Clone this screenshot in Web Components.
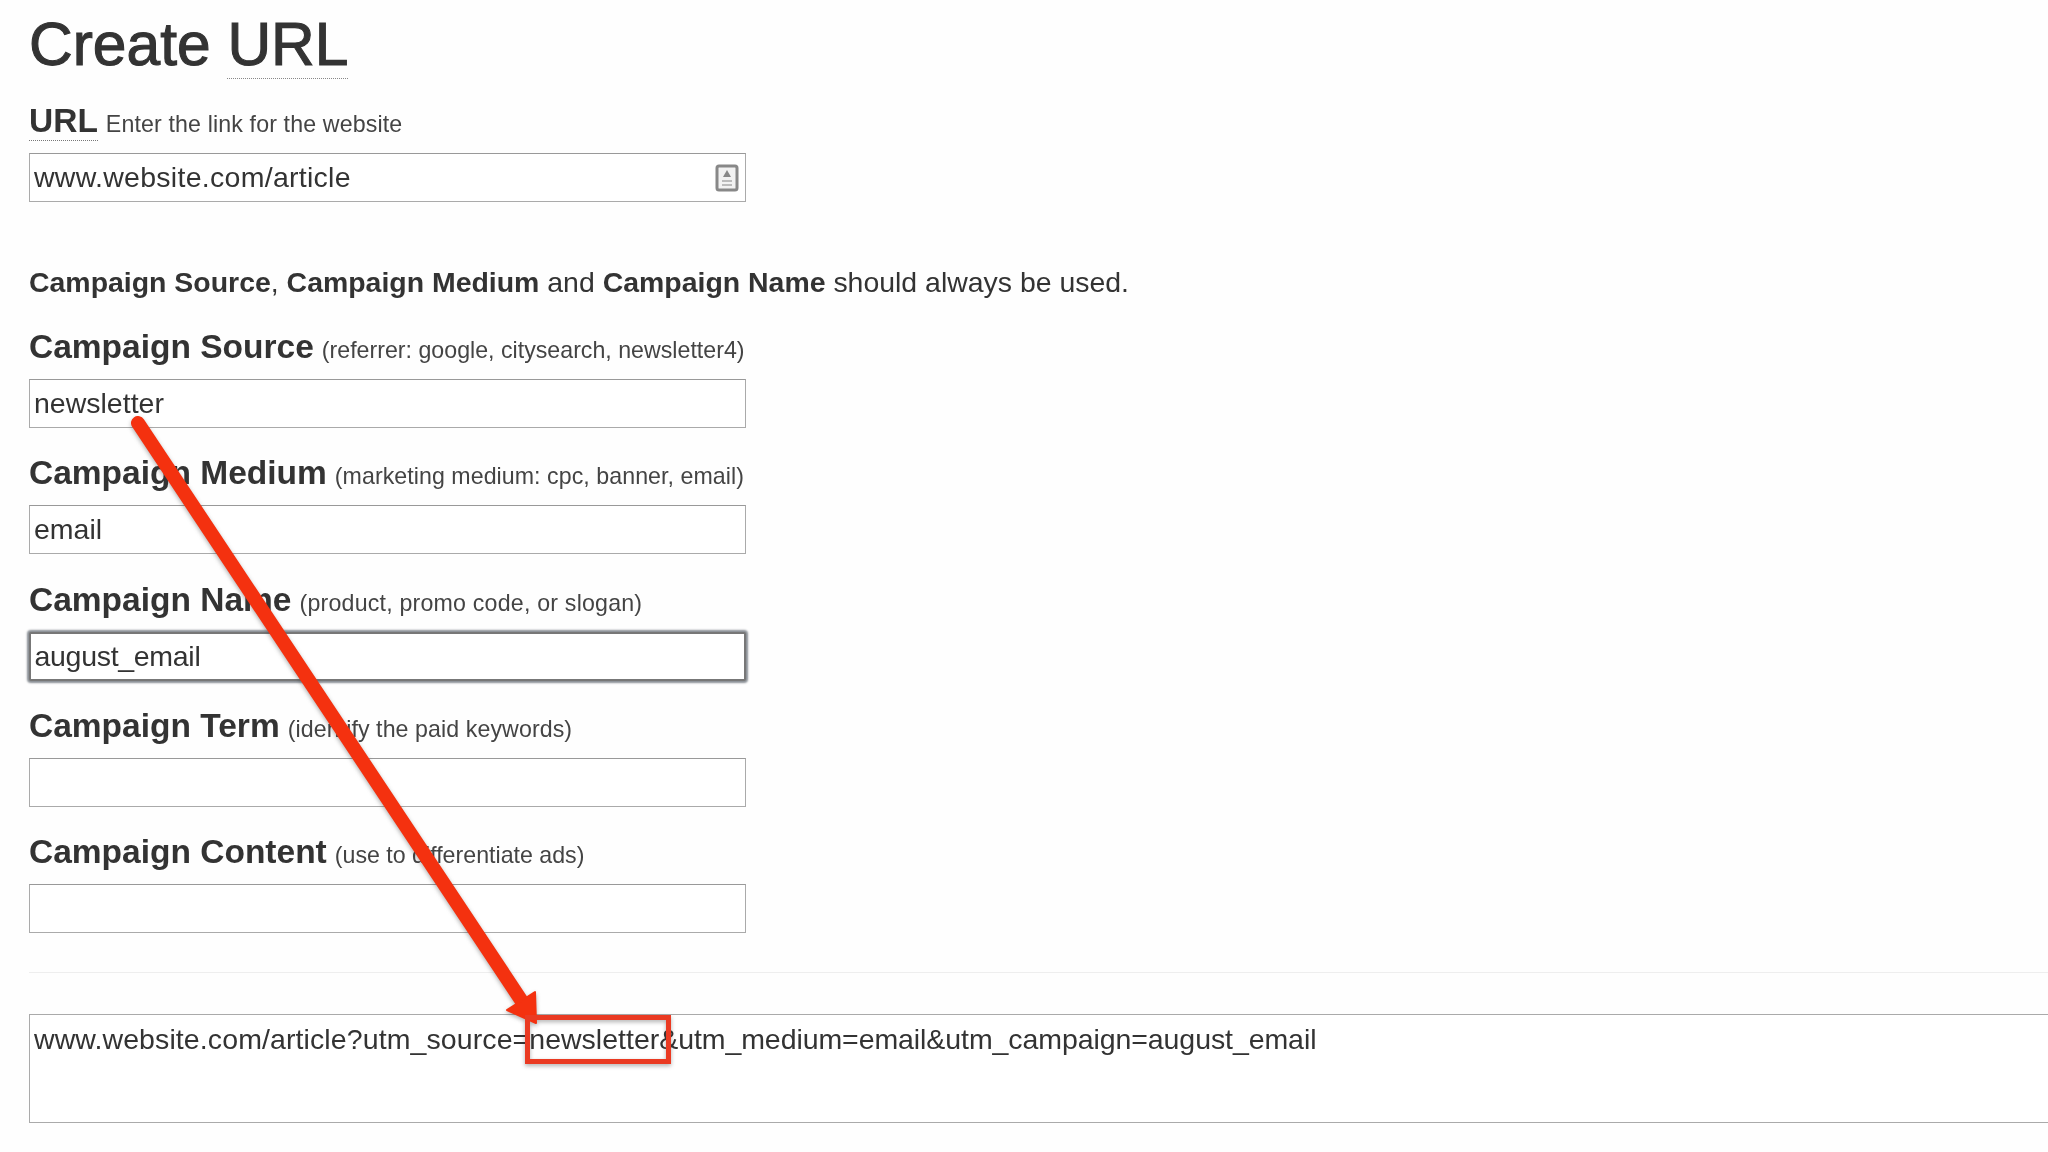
<!DOCTYPE html>
<html>
<head>
<meta charset="utf-8">
<title>Create URL</title>
<style>
  html, body { margin: 0; height: 100%; overflow: hidden; background: #fefefe; }
  body { font-family: "Liberation Sans", Arial, sans-serif; color: #333; }
  main { display: flex; flex-direction: column; padding-left: 29px; height: 1152px; box-sizing: border-box; filter: blur(.5px); }
</style>
</head>
<body>
<main>
  <page-title>Create <abbr>URL</abbr></page-title>
  <form-field label="URL" hint="Enter the link for the website" hint-track=".13" value="www.website.com/article" track=".28" dotted icon first></form-field>
  <form-note><b>Campaign Source</b>, <b>Campaign Medium</b> and <b>Campaign Name</b> should always be used.</form-note>
  <form-field label="Campaign Source" hint="(referrer: google, citysearch, newsletter4)" value="newsletter"></form-field>
  <form-field label="Campaign Medium" hint="(marketing medium: cpc, banner, email)" hint-track=".05" value="email"></form-field>
  <form-field label="Campaign Name" hint="(product, promo code, or slogan)" hint-track=".2" value="august_email" track="-.3" focus></form-field>
  <form-field label="Campaign Term" hint="(identify the paid keywords)" hint-track=".08"></form-field>
  <form-field label="Campaign Content" hint="(use to differentiate ads)"></form-field>
  <url-output><span style="letter-spacing:.1px">www.website.com/article?utm_source=</span>newsletter<span style="letter-spacing:-.08px">&amp;utm_medium=email&amp;utm_campaign=august_email</span></url-output>
</main>
<red-arrow></red-arrow>

<script>
class PageTitle extends HTMLElement {
  constructor(){
    super();
    this.attachShadow({mode:'open'}).innerHTML = /* html */ `
      <style>
        :host { display: block; height: 101px; }
        h1 { margin: 0; padding-top: 10px; font-size: 60.5px; line-height: 69px; font-weight: 400; color: #333; -webkit-text-stroke: 1.1px #333; }
        ::slotted(abbr) { text-decoration: none; border-bottom: 1px dotted #888; }
      </style>
      <h1><slot></slot></h1>`;
  }
}

class FormField extends HTMLElement {
  constructor(){
    super();
    this.attachShadow({mode:'open'});
  }
  connectedCallback(){
    const label = this.getAttribute('label');
    const hint = this.getAttribute('hint');
    const value = this.getAttribute('value') || '';
    const track = this.getAttribute('track') || 0;
    const hintTrack = this.getAttribute('hint-track') || 0;
    this.shadowRoot.innerHTML = /* html */ `
      <style>
        :host { display: block; height: 126.3px; }
        :host([first]) { height: 101px; margin-bottom: 64px; }
        .head { display: flex; align-items: baseline; height: 52px; padding-top: 1px; gap: 8px; box-sizing: border-box; white-space: nowrap; }
        .label { font-size: 33.5px; line-height: 38px; font-weight: 700; color: #333; }
        :host([dotted]) .label { border-bottom: 1px dotted #777; }
        .hint { font-size: 23.2px; color: #444; }
        .box { display: flex; align-items: center; justify-content: space-between; width: 717px; height: 49px; box-sizing: border-box; padding: 0 6px 0 4px; background: #fff; border: 1.5px solid #aaa; border-top-color: #999; font-size: 28.5px; color: #333; }
        :host([focus]) .box { border: 2px solid #777; box-shadow: 0 0 2px 2px #8a8f95; border-radius: 2px; padding-left: 3.5px; }
        svg { width: 24px; height: 28px; }
      </style>
      <div class="head"><span class="label">${label}</span><span class="hint" style="letter-spacing:${hintTrack}px">${hint}</span></div>
      <div class="box"><span style="letter-spacing:${track}px">${value}</span>${this.hasAttribute('icon') ? `
        <svg viewBox="0 0 24 28"><rect x="2" y="2" width="20" height="24" rx="2" fill="#f2f2f2" stroke="#888" stroke-width="3"/><path d="M12 6l4 7H8z" fill="#888"/><path d="M7 16h10v2H7zM7 20h10v2H7z" fill="#bbb"/></svg>` : ''}</div>`;
  }
}

class FormNote extends HTMLElement {
  constructor(){
    super();
    this.attachShadow({mode:'open'}).innerHTML = /* html */ `
      <style>
        :host { display: block; height: 61px; font-size: 28.45px; line-height: 32px; color: #333; white-space: nowrap; }
      </style>
      <slot></slot>`;
  }
}

class UrlOutput extends HTMLElement {
  constructor(){
    super();
    this.attachShadow({mode:'open'}).innerHTML = /* html */ `
      <style>
        :host { display: block; margin-top: 14px; margin-right: -29px; border-top: 1px solid #eee; padding-top: 41px; }
        .box { height: 109px; box-sizing: border-box; padding: 8px 4px; background: #fff; border: 1.5px solid #aaa; border-right: 0; font-size: 28.5px; line-height: 32px; color: #333; white-space: nowrap; }
      </style>
      <div class="box"><slot></slot></div>`;
  }
}

class RedArrow extends HTMLElement {
  constructor(){
    super();
    this.attachShadow({mode:'open'}).innerHTML = /* html */ `
      <style>
        :host { position: absolute; left: 0; top: 0; width: 2048px; height: 1152px; pointer-events: none; }
        svg { display: block; filter: blur(.5px) drop-shadow(0 2px 2px rgba(60,60,60,.4)); }
      </style>
      <svg width="2048" height="1152" viewBox="0 0 2048 1152">
        <path d="M138 423L521 1000" stroke="#f4310f" stroke-width="14" stroke-linecap="round" fill="none"/>
        <path d="M535 992L536 1023L507 1010Z" fill="#f4310f" stroke="#f4310f" stroke-width="2" stroke-linejoin="round"/>
        <rect x="527.5" y="1017.5" width="141" height="44" fill="none" stroke="#ea3a22" stroke-width="5"/>
      </svg>`;
  }
}

customElements.define('page-title', PageTitle);
customElements.define('form-field', FormField);
customElements.define('form-note', FormNote);
customElements.define('url-output', UrlOutput);
customElements.define('red-arrow', RedArrow);
</script>
</body>
</html>
